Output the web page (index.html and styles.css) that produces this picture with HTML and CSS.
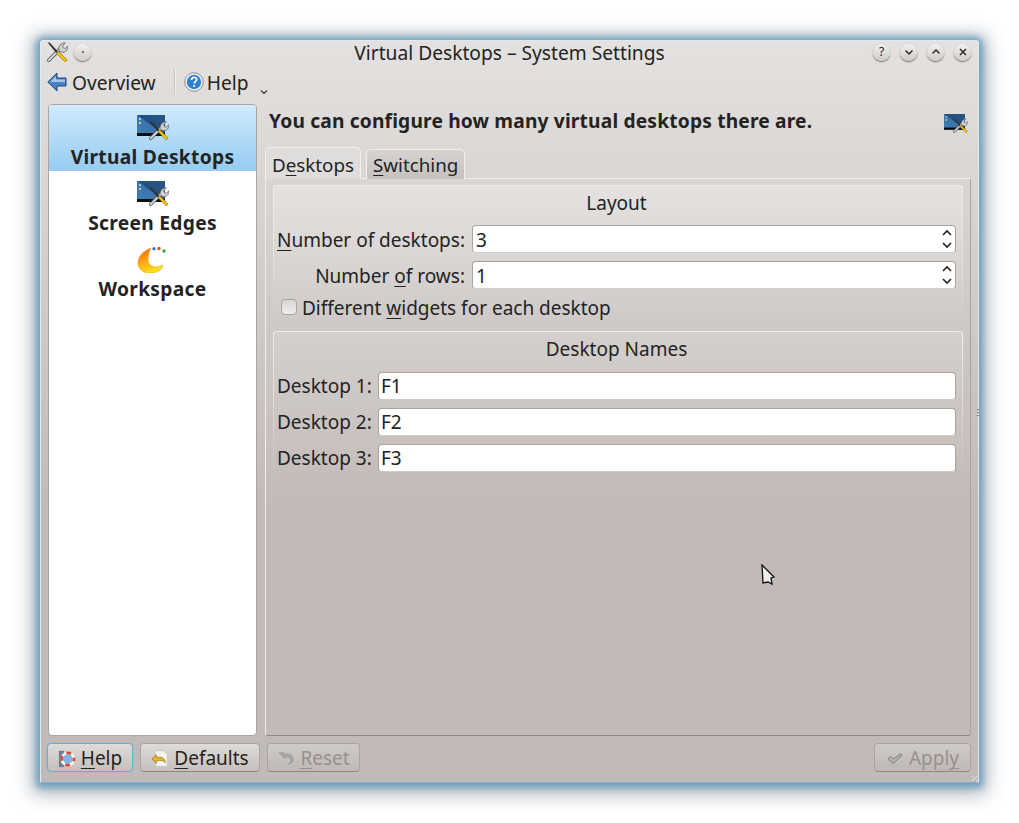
FILE: index.html
```html
<!DOCTYPE html>
<html lang="en">
<head>
<meta charset="UTF-8" />
<title>Virtual Desktops – System Settings</title>
<link rel="stylesheet" href="styles.css">
</head>
<body>
  <svg class="defs" width="0" height="0">
    <defs>
      <linearGradient id="screenGrad" x1="0" y1="1" x2="1" y2="0">
        <stop offset="0" stop-color="#3f7db8" />
        <stop offset="0.5" stop-color="#3a74aa" />
        <stop offset="0.52" stop-color="#24507f" />
        <stop offset="1" stop-color="#2a5585" />
      </linearGradient>
      <linearGradient id="logoGrad" x1="0" y1="0" x2="0.4" y2="1">
        <stop offset="0" stop-color="#ee6a14" />
        <stop offset="0.55" stop-color="#ffa512" />
        <stop offset="1" stop-color="#ffe01a" />
      </linearGradient>
      <symbol id="tools" viewBox="0 0 24 24">
        <path d="M3 21L16 8" stroke="#555" stroke-width="4" stroke-linecap="round" />
        <path d="M3 21L16 8" stroke="#d2d2d2" stroke-width="2.400" stroke-linecap="round" />
        <path d="M14 10c-1-4 2-8 7-8l-3 3.500 1 2 2 .7 3-2.700c0 5-4 8-8 6.500z" fill="#cfcfcf" stroke="#555" stroke-width=".8" />
        <path d="M2 2l2-.5 9 10-2 1.500z" fill="#333" />
        <path d="M11.500 13.500l2-2 9 8.500c.8 1.200-.8 3-2.200 2.200z" fill="#f4c414" stroke="#7d6400" stroke-width=".7" />
      </symbol>
      <symbol id="deskIcon" viewBox="0 0 32 26">
        <rect x="0" y="0" width="28" height="21" fill="url(#screenGrad)" />
        <rect x="0" y="18" width="28" height="3" fill="#0d0d0d" />
        <rect x="2" y="3" width="2" height="2" fill="#a9c6dc" />
        <rect x="2" y="7" width="2" height="2" fill="#c5d68a" />
        <use href="#tools" x="11" y="5" width="21" height="21" />
      </symbol>
    </defs>
  </svg>

  <div class="window">
    <div class="titlebar">
      <div class="title-left">
        <svg class="app-icon"><use href="#tools" /></svg>
        <span class="wbtn"><i class="dot"></i></span>
      </div>
      <div class="title-text">Virtual Desktops – System Settings</div>
      <div class="title-right">
        <span class="wbtn">?</span>
        <span class="wbtn"><svg viewBox="0 0 10 10"><path d="M1.500 3.500L5 7l3.500-3.500" /></svg></span>
        <span class="wbtn"><svg viewBox="0 0 10 10"><path d="M1.500 6.500L5 3l3.500 3.500" /></svg></span>
        <span class="wbtn"><svg viewBox="0 0 10 10"><path d="M2 2l6 6M8 2l-6 6" /></svg></span>
      </div>
    </div>

    <div class="toolbar">
      <a class="tool">
        <svg class="tool-icon" viewBox="0 0 20 20"><path d="M.8 10L10 1v5h9v8h-9v5z" fill="#4a80c4" stroke="#23477c" stroke-width="1" /><path d="M3 10l6-6v3.500h9V10z" fill="#a3c5ec" /></svg>
        <span>Overview</span>
      </a>
      <span class="tool-sep"></span>
      <a class="tool tool-help">
        <svg class="tool-icon" viewBox="0 0 20 20"><circle cx="10" cy="10" r="9.300" fill="#eef2f6" stroke="#8a8a8a" /><circle cx="10" cy="10" r="7.200" fill="#2f7fd0" /><path d="M7.500 8c0-3.500 5.200-3.500 5.200-.4 0 2-2.500 2-2.500 4" fill="none" stroke="#fff" stroke-width="1.700" /><circle cx="10.200" cy="14" r="1.100" fill="#fff" /></svg>
        <span>Help</span>
      </a>
      <svg class="tool-more" viewBox="0 0 8 6"><path d="M1 1.500l3 3 3-3" /></svg>
    </div>

    <div class="content">
      <aside class="sidebar">
        <div class="side-item active">
          <svg class="side-icon"><use href="#deskIcon" /></svg>
          <span>Virtual Desktops</span>
        </div>
        <div class="side-item">
          <svg class="side-icon"><use href="#deskIcon" /></svg>
          <span>Screen Edges</span>
        </div>
        <div class="side-item">
          <svg class="side-icon" viewBox="0 0 32 26">
            <path d="M14 1C6 4 1 9 1 16c0 6 5 10 12 10 6 0 12-2 13-8-4 2-8 2.500-11 1-4-2-4.500-6-3.500-10 .5-3 1-5 2.500-8z" fill="url(#logoGrad)" stroke="#ee9a12" stroke-width=".5" />
            <circle cx="17" cy="1.800" r="1.700" fill="#3d78d8" />
            <circle cx="22" cy="1.500" r="1.700" fill="#d9542b" />
            <circle cx="27" cy="4" r="1.700" fill="#35a838" />
          </svg>
          <span>Workspace</span>
        </div>
      </aside>

      <section class="page">
        <div class="page-head">
          <b>You can configure how many virtual desktops there are.</b>
          <svg class="head-icon"><use href="#deskIcon" /></svg>
        </div>
        <div class="tabs">
          <div class="tab current">D<u>e</u>sktops</div>
          <div class="tab"><u>S</u>witching</div>
        </div>
        <div class="pane">
          <fieldset class="group group-layout">
            <div class="group-title">Layout</div>
            <div class="form-row">
              <label><u>N</u>umber of desktops:</label>
              <div class="field">3<svg class="spin" viewBox="0 0 10 20"><path d="M1 6l4-4 4 4M1 14l4 4 4-4" /></svg></div>
            </div>
            <div class="form-row">
              <label>Number <u>o</u>f rows:</label>
              <div class="field">1<svg class="spin" viewBox="0 0 10 20"><path d="M1 6l4-4 4 4M1 14l4 4 4-4" /></svg></div>
            </div>
            <div class="check-row"><span class="check"></span><span>Different <u>w</u>idgets for each desktop</span></div>
          </fieldset>
          <fieldset class="group group-names">
            <div class="group-title">Desktop Names</div>
            <div class="form-row"><label>Desktop 1:</label><div class="field">F1</div></div>
            <div class="form-row"><label>Desktop 2:</label><div class="field">F2</div></div>
            <div class="form-row"><label>Desktop 3:</label><div class="field">F3</div></div>
          </fieldset>
        </div>
      </section>
    </div>

    <div class="buttons">
      <button class="btn btn-help focus">
        <svg viewBox="0 0 20 20"><rect x="1" y="1" width="6" height="18" fill="#6d7f8f" /><circle cx="11" cy="10" r="6.800" fill="#7ab6e6" stroke="#f6f3f0" stroke-width="3" /><circle cx="11" cy="10" r="6.800" fill="none" stroke="#d9482f" stroke-width="3" stroke-dasharray="5.300 5.400" stroke-dashoffset="2.600" /></svg>
        <span><u>H</u>elp</span>
      </button>
      <button class="btn btn-defaults">
        <svg viewBox="0 0 20 20"><path d="M5 1h9l4 4v13H5z" fill="#f6f4f0" stroke="#bbb" stroke-width=".6" /><path d="M1 10l5-4.500v3c5-1.500 10 .5 10 5.500-2-2.500-6-3-10-2V15z" fill="#eeb422" stroke="#8c6508" stroke-width=".7" /></svg>
        <span><u>D</u>efaults</span>
      </button>
      <button class="btn btn-reset disabled">
        <svg viewBox="0 0 20 20"><path d="M2 3h6L7 5c5-2 11 0 11 5.500 0 3-3 5.500-6 5.500 3-1 4-3.500 3-5.500-1-3-5-3-7.500-2L9 10z" fill="#aaa5a2" stroke="#8f8a87" stroke-width=".5" /></svg>
        <span><u>R</u>eset</span>
      </button>
      <div class="btn-spacer"></div>
      <button class="btn btn-apply disabled">
        <svg viewBox="0 0 20 20"><path d="M2 10l3-3 3 3 8-6 2 2-10 9z" fill="#b5b0ad" stroke="#7d7977" stroke-width="1" /></svg>
        <span>Appl<u>y</u></span>
      </button>
    </div>

    <svg class="cursor" viewBox="0 0 14 22"><path d="M1 1l12 12-3 1 1 6-4-2-5 1z" fill="#eee" stroke="#111" stroke-width="1.300" /></svg>
    <span class="pane-grip"></span>
    <span class="corner-grip"></span>
  </div>
</body>
</html>
```

FILE: styles.css
```css
* {
  box-sizing: border-box;
}
body {
  margin: 0;
  height: 823px;
  background: #fff;
  font-family: "Noto Sans", "Open Sans", sans-serif;
  font-size: 19px;
  color: #232323;
  overflow: hidden;
}
.defs {
  position: absolute;
}
u {
  text-underline-offset: 3px;
  text-decoration-thickness: 1px;
}
.window {
  position: relative;
  display: flex;
  flex-direction: column;
  width: 939px;
  height: 743px;
  margin: 40px 0 0 40px;
  background: linear-gradient(#e4e2e0 0, #dad7d5 120px, #c2bab7 470px, #c2bab7 100%);
  border: 1px solid #dfe9ef;
  border-bottom: 1px solid #7fb2d0;
  border-radius: 4px 4px 2px 2px;
  box-shadow: 0 1px 6px 4px rgba(100, 155, 190, .85), 0 3px 18px 9px rgba(70, 90, 110, .4);
}

/* title bar */
.titlebar {
  display: flex;
  align-items: center;
  height: 24px;
  padding: 0 7px 2px 5px;
  flex-shrink: 0;
}
.title-left, .title-right {
  display: flex;
  align-items: center;
  width: 130px;
}
.title-left {
  gap: 6px;
}
.title-right {
  justify-content: flex-end;
  gap: 10px;
}
.title-text {
  flex: 1;
  text-align: center;
  font-size: 19.200px;
  line-height: 24px;
  padding-left: 2px;
  margin-top: 2px;
}
.app-icon {
  width: 22px;
  height: 22px;
}
.wbtn {
  display: flex;
  align-items: center;
  justify-content: center;
  width: 17px;
  height: 17px;
  border-radius: 50%;
  background: linear-gradient(#f2f1f0, #cfcbc8);
  box-shadow: 0 1px 1.500px rgba(0, 0, 0, .55);
  font-size: 12px;
  line-height: 1;
}
.wbtn svg {
  width: 10px;
  height: 10px;
  fill: none;
  stroke: #2c2c2c;
  stroke-width: 1.500;
}
.dot {
  width: 2px;
  height: 2px;
  background: #555;
  border-radius: 50%;
}

/* toolbar */
.toolbar {
  display: flex;
  align-items: center;
  height: 35px;
  padding: 0 0 1px 6px;
  font-size: 19.200px;
  flex-shrink: 0;
}
.tool {
  display: flex;
  align-items: center;
  gap: 5px;
}
.tool-help {
  gap: 3px;
}
.tool-icon {
  width: 20px;
  height: 20px;
}
.tool-sep {
  width: 1px;
  height: 26px;
  margin: 0 9px 0 18px;
  background: #c8c5c2;
  box-shadow: 1px 0 0 #eee;
}
.tool-more {
  width: 8px;
  height: 6px;
  margin: 20px 0 0 11px;
  fill: none;
  stroke: #333;
  stroke-width: 1.200;
}

/* main area */
.content {
  display: flex;
  gap: 8px;
  height: 636px;
  padding: 4px 7px 0;
  flex-shrink: 0;
}
.sidebar {
  width: 209px;
  background: #fff;
  border: 1px solid #aaa5a2;
  border-radius: 4px;
  overflow: hidden;
  flex-shrink: 0;
}
.side-item {
  display: flex;
  flex-direction: column;
  align-items: center;
  height: 66px;
  padding-top: 10px;
  font-size: 19.200px;
  font-weight: 700;
  letter-spacing: .3px;
  line-height: 28px;
}
.side-item.active {
  background: linear-gradient(#d0ebfe, #96cbf0);
}
.side-icon {
  width: 32px;
  height: 26px;
  margin-bottom: 2px;
}
.page {
  flex: 1;
  display: flex;
  flex-direction: column;
}
.page-head {
  display: flex;
  align-items: center;
  justify-content: space-between;
  height: 33px;
  padding: 0 0 0 4px;
  font-size: 19.200px;
  letter-spacing: .17px;
  margin-bottom: 10px;
}
.head-icon {
  width: 24px;
  height: 19.500px;
  margin: 7px 3px 0 0;
}
.tabs {
  display: flex;
  gap: 5px;
  height: 32px;
  margin-bottom: -1px;
  position: relative;
  z-index: 1;
  font-size: 18.800px;
}
.tab {
  padding: 2px 6px 0;
  margin-top: 2px;
  border: 1px solid #f1f0ee;
  border-bottom: 0;
  border-radius: 5px 5px 0 0;
  background: linear-gradient(#d6d3d0, #c6c1be);
  line-height: 27px;
}
.tab.current {
  margin-top: 0;
  padding-top: 4px;
  background: #dfdddb;
}
.pane {
  flex: 1;
  padding: 6px 7px;
  border: 1px solid #f0eeec;
  border-bottom-color: #8e8a88;
  border-right-color: #a8a3a1;
  border-radius: 3px;
}
.group {
  margin: 0;
  padding: 0 7px 0 4px;
  border: 0;
  border-top: 1px solid #f0eeec;
  border-radius: 4px 4px 0 0;
  background-image: linear-gradient(rgba(255, 255, 255, .3), rgba(255, 255, 255, 0));
  position: relative;
}
.group::before, .group::after {
  content: "";
  position: absolute;
  top: 0;
  bottom: 0;
  width: 1px;
  background: linear-gradient(#efedeb, rgba(239, 237, 235, 0));
}
.group::before {
  left: 0;
}
.group::after {
  right: 0;
}
.group-layout {
  height: 136px;
  margin-bottom: 10px;
}
.group-names {
  height: 145px;
  background-image: linear-gradient(rgba(255, 255, 255, .12), rgba(255, 255, 255, 0));
}
.group-title {
  height: 39px;
  line-height: 34px;
  text-align: center;
}
.group-names .group-title {
  height: 40px;
  line-height: 35px;
}
.form-row {
  display: flex;
  align-items: center;
  gap: 7px;
  height: 28px;
  margin-bottom: 8px;
}
.group-layout label {
  width: 188px;
  padding-top: 2px;
  text-align: right;
  white-space: nowrap;
}
.group-names label {
  width: 94px;
  white-space: nowrap;
}
.field {
  flex: 1;
  position: relative;
  height: 28px;
  padding-left: 3px;
  background: #fff;
  border: 1px solid #a8a4a1;
  border-bottom-color: #cfcbc8;
  border-radius: 4px;
  line-height: 26px;
}
.group-layout .field {
  line-height: 28px;
}
.group-names .field {
  padding-left: 2px;
}
.spin {
  position: absolute;
  right: 3px;
  top: 3px;
  width: 10px;
  height: 20px;
  fill: none;
  stroke: #222;
  stroke-width: 1.600;
}
.check-row {
  display: flex;
  align-items: center;
  gap: 5px;
  height: 28px;
  margin-top: -3px;
  padding-left: 4px;
}
.check {
  width: 16px;
  height: 16px;
  margin-top: -2px;
  background: linear-gradient(#d8d5d3, #f0eeed);
  border: 1px solid #a9a5a2;
  border-radius: 4px;
}

/* bottom buttons */
.buttons {
  display: flex;
  gap: 7px;
  height: 29px;
  margin-top: 7px;
  padding: 0 7px 0 6px;
  flex-shrink: 0;
}
.btn {
  display: flex;
  align-items: center;
  justify-content: center;
  gap: 5px;
  height: 29px;
  padding: 2px 0 0;
  font: inherit;
  line-height: 27px;
  color: #232323;
  background: linear-gradient(#dedbd9, #c5c0bd);
  border: 1px solid #aaa5a2;
  border-bottom-color: #8c8886;
  border-radius: 4px;
}
.btn svg {
  width: 18px;
  height: 18px;
}
.btn-help {
  width: 86px;
}
.btn-defaults {
  width: 120px;
}
.btn-reset {
  width: 93px;
}
.btn-apply {
  width: 97px;
}
.btn.focus {
  border-color: #62aedb;
  box-shadow: 0 0 1px #62aedb;
}
.btn.disabled {
  color: #96918e;
  background: linear-gradient(#cfcbc8, #bfb8b5);
}
.btn-spacer {
  flex: 1;
}

.cursor {
  position: absolute;
  left: 720px;
  top: 523px;
  width: 14px;
  height: 22px;
}
.pane-grip {
  position: absolute;
  left: 936px;
  top: 368px;
  width: 2px;
  height: 8px;
  background: repeating-linear-gradient(#8f8b88 0 1px, transparent 1px 3px);
}
.corner-grip {
  position: absolute;
  right: 1px;
  bottom: 1px;
  width: 5px;
  height: 5px;
  background: repeating-linear-gradient(135deg, #f0eeec 0 1px, transparent 1px 3px);
}
```
